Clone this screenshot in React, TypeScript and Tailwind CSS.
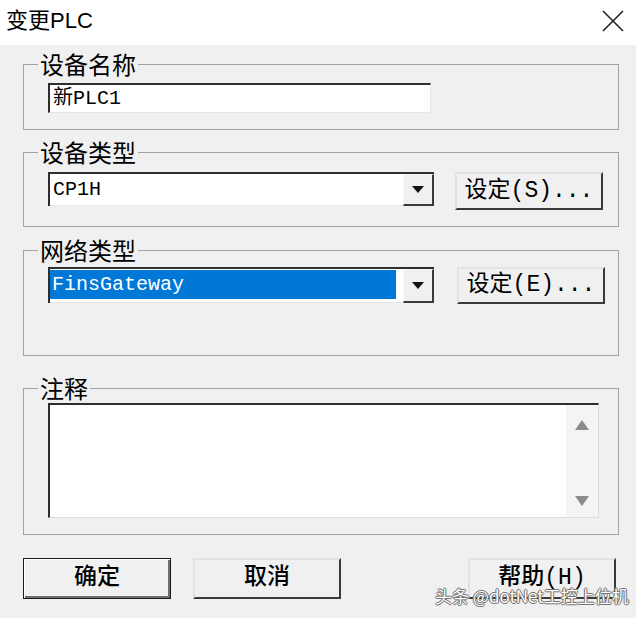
import type { ReactNode } from "react";

const cjk = "font-['Noto_Sans_CJK_SC',sans-serif]";
const mono = "font-['Liberation_Mono','Noto_Sans_CJK_SC',monospace]";

function GroupBox({
	title,
	className,
	children,
}: {
	title: string;
	className: string;
	children: ReactNode;
}) {
	return (
		<fieldset className={`border border-[#a3a3a3] ${className}`}>
			<legend
				className={`ml-[14px] px-[2px] h-[26px] text-[24px] leading-[26px] text-black ${cjk}`}
			>
				{title}
			</legend>
			{children}
		</fieldset>
	);
}

function DropArrow() {
	return (
		<div className="flex h-full w-[31px] flex-shrink-0 items-center justify-center border-b-2 border-r-2 border-t border-l border-b-[#3a3a3a] border-r-[#3a3a3a] border-t-[#f7f7f7] border-l-[#f7f7f7] bg-[#f0f0f0]">
			<svg width="12" height="7" viewBox="0 0 12 7">
				<path d="M0 0h12L6 7z" fill="#111" />
			</svg>
		</div>
	);
}

function SetButton({ label, className }: { label: string; className: string }) {
	return (
		<div
			className={`flex w-[148px] items-center justify-center border-2 border-t-[#e2e2e2] border-l-[#e2e2e2] border-r-[#3a3a3a] border-b-[#3a3a3a] bg-[#f0f0f0] text-[23px] text-black ${mono} ${className}`}
		>
			{label}
		</div>
	);
}

function DialogButton({
	label,
	isDefault,
	className,
}: {
	label: string;
	isDefault?: boolean;
	className?: string;
}) {
	return (
		<div
			className={`flex h-[41px] w-[148px] items-center justify-center bg-[#f0f0f0] text-[23px] font-medium text-black ${mono} ${
				isDefault
					? "border border-[#1a1a1a] shadow-[inset_1px_1px_0_#ffffff,inset_-2px_-2px_0_#6e6e6e]"
					: "border-2 border-t-[#e2e2e2] border-l-[#e2e2e2] border-r-[#3a3a3a] border-b-[#3a3a3a]"
			} ${className ?? ""}`}
		>
			{label}
		</div>
	);
}

export default function App() {
	return (
		<div className="relative h-[618px] w-[636px] overflow-hidden bg-[#f0f0f0] text-black">
			<div className="flex h-[45px] items-center justify-between bg-white pb-[4px] pl-[6px] pr-[12px]">
				<div className="font-['Liberation_Sans','Noto_Sans_CJK_SC',sans-serif] text-[22px]">
					变更PLC
				</div>
				<svg width="22" height="22" viewBox="0 0 22 22">
					<path d="M1 1L21 21M21 1L1 21" stroke="#222" strokeWidth="1.6" />
				</svg>
			</div>

			<div className="pl-[23px] pr-[17px]">
				<GroupBox title="设备名称" className="mt-[6px]">
					<div className="pb-[16px] pl-[24px] pt-[6px]">
						<div
							className={`flex h-[30px] w-[383px] items-center border-t-2 border-l-2 border-b border-r border-t-[#2e2e2e] border-l-[#2e2e2e] border-b-[#e6e6e6] border-r-[#e6e6e6] bg-white pl-[3px] text-[20px] ${mono}`}
						>
							新PLC1
						</div>
					</div>
				</GroupBox>

				<GroupBox title="设备类型" className="mt-[9px]">
					<div className="flex items-start pb-[16px] pl-[24px] pt-[7px]">
						<div className="flex h-[34px] w-[386px] border-t-2 border-l-2 border-[#2e2e2e]">
							<div
								className={`flex flex-1 items-center border-b border-[#e6e6e6] bg-white pl-[3px] text-[20px] ${mono}`}
							>
								CP1H
							</div>
							<DropArrow />
						</div>
						<SetButton label="设定(S)..." className="ml-[21px] h-[38px]" />
					</div>
				</GroupBox>

				<GroupBox title="网络类型" className="mt-[10px]">
					<div className="flex items-start pb-[51px] pl-[24px] pt-[4px]">
						<div className="flex h-[36px] w-[386px] border-t-2 border-l-2 border-[#2e2e2e]">
							<div className="flex flex-1 border-b border-[#e6e6e6] bg-white">
								<div
									className={`mb-[3px] mr-[7px] mt-[1px] flex flex-1 items-center bg-[#0078d7] pl-[2px] text-[20px] text-white ${mono}`}
								>
									FinsGateway
								</div>
							</div>
							<DropArrow />
						</div>
						<SetButton label="设定(E)..." className="ml-[23px] h-[37px]" />
					</div>
				</GroupBox>

				<GroupBox title="注释" className="mt-[19px]">
					<div className="pb-[16px] pl-[24px] pt-[2px]">
						<div className="flex h-[115px] w-[551px] border-t-2 border-l-2 border-b border-r border-t-[#2e2e2e] border-l-[#2e2e2e] border-b-[#dcdcdc] border-r-[#dcdcdc] bg-white">
							<div className="flex-1" />
							<div className="flex w-[32px] flex-col items-center justify-between bg-[#f4f4f4] pb-[11px] pt-[15px]">
								<svg width="14" height="10" viewBox="0 0 14 10">
									<path d="M7 0L14 10H0z" fill="#8c8c8c" />
								</svg>
								<svg width="14" height="10" viewBox="0 0 14 10">
									<path d="M0 0h14L7 10z" fill="#8c8c8c" />
								</svg>
							</div>
						</div>
					</div>
				</GroupBox>

				<div className="mt-[23px] flex">
					<DialogButton label="确定" isDefault />
					<DialogButton label="取消" className="ml-[22px]" />
					<DialogButton label="帮助(H)" className="ml-auto mr-[3px]" />
				</div>
			</div>

			<div
				className={`absolute left-[435px] top-[586px] text-[17px] leading-[20px] text-white [text-shadow:0_0_1px_#555,1px_0_0_#777,-1px_0_0_#777,0_1px_0_#777,0_-1px_0_#777] ${cjk}`}
			>
				头条 @dotNet工控上位机
			</div>
		</div>
	);
}
